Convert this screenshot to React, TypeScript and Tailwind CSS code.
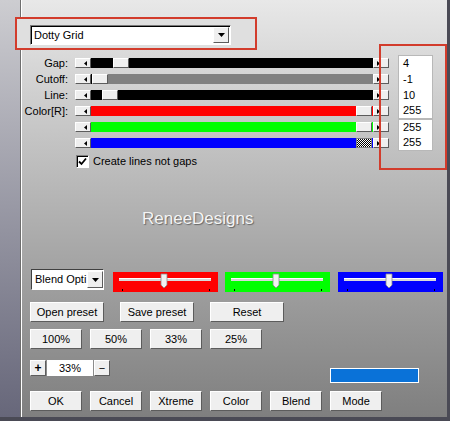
import React from 'react'

type Row = { label: string; fill: string; rest: string; pos: number; value: string; checker?: boolean }

const rows: Row[] = [
  { label: 'Gap:', fill: '#000000', rest: '#000000', pos: 22, value: '4' },
  { label: 'Cutoff:', fill: '#000000', rest: '#808080', pos: 1, value: '-1' },
  { label: 'Line:', fill: '#000000', rest: '#000000', pos: 11, value: '10' },
  { label: 'Color[R]:', fill: '#ff0000', rest: '#ff0000', pos: 265, value: '255' },
  { label: '', fill: '#00ff00', rest: '#00ff00', pos: 265, value: '255' },
  { label: '', fill: '#0000ff', rest: '#0000ff', pos: 265, value: '255', checker: true },
]

function Bevel({ className = '', children }: { className?: string; children?: React.ReactNode }) {
  return (
    <div
      className={`flex items-center justify-center bg-[#efefef] border border-t-white border-l-white border-r-[#5c5c5c] border-b-[#5c5c5c] ${className}`}
    >
      {children}
    </div>
  )
}

function Arrow({ dir }: { dir: 'left' | 'right' | 'down' }) {
  if (dir === 'down')
    return (
      <svg width="7" height="4" viewBox="0 0 7 4">
        <path d="M0 0H7L3.5 4Z" fill="#000" />
      </svg>
    )
  return (
    <svg width="3" height="5" viewBox="0 0 3 5">
      <path d={dir === 'left' ? 'M3 0V5L0 2.5Z' : 'M0 0V5L3 2.5Z'} fill="#000" />
    </svg>
  )
}

function ColorSlider({ color, className = '' }: { color: string; className?: string }) {
  return (
    <svg width="105" height="20" viewBox="0 0 105 20" className={className}>
      <rect width="105" height="20" fill={color} />
      <rect x="6" y="6" width="92" height="3" fill="#d8d8d8" />
      <rect x="6" y="6" width="92" height="1" fill="#ffffff" />
      <path d="M48 2H54V13L51 16L48 13Z" fill="#f2f2f2" stroke="#8a8a8a" strokeWidth="0.8" />
      <rect x="9" y="17" width="1" height="2" fill="#000" />
      <rect x="96" y="17" width="1" height="2" fill="#000" />
    </svg>
  )
}

function Btn({ w, label }: { w: string; label: string }) {
  return <Bevel className={`${w} h-[20px] text-[11px] text-black`}>{label}</Bevel>
}

export default function App() {
  return (
    <div className="flex w-[450px] h-[421px] overflow-hidden border-r-[3px] border-b-[4px] border-[#4a4a55] font-['Liberation_Sans',Arial,sans-serif] text-[11px] text-black">
      {/* left stripe */}
      <div className="w-[20px] h-full bg-linear-to-b from-[#cdcdd1] to-[#67677a]" />
      <div className="w-px h-full bg-[#6e6e6e]" />
      <div className="w-px h-full bg-white" />

      <div className="relative flex-1 flex flex-col bg-linear-to-b from-[#e8e8e8] to-[#7f7f7f]">
        {/* preset dropdown, highlighted */}
        <div className="relative -ml-[7px] mt-[17px] w-[242px] h-[33px] border-2 border-[#d23c2c] bg-[#dfdfdf] pl-[13px] pt-[6px]">
          <div className="flex items-center w-[201px] h-[20px] bg-white border border-t-[#7a7a7a] border-l-[#7a7a7a] border-r-white border-b-white shadow-[inset_1px_1px_0_#000]">
            <span className="flex-1 pl-[3px] leading-none">Dotty Grid</span>
            <Bevel className="w-[16px] h-[16px] mr-px">
              <Arrow dir="down" />
            </Bevel>
          </div>
        </div>

        {/* slider rows */}
        <div className="mt-[5px] flex flex-col">
          {rows.map((r, i) => (
            <div key={i} className="flex items-center h-[16px]">
              <div className="w-[48px] pr-[2px] text-right leading-none">{r.label}</div>
              <Bevel className="ml-[5px] w-[16px] h-[10px] !justify-end pr-[3px]">
                <Arrow dir="left" />
              </Bevel>
              <div className="flex w-[282px] h-[10px]" style={{ backgroundColor: r.rest }}>
                <div className="h-full" style={{ width: r.pos, backgroundColor: r.fill }} />
                {r.checker ? (
                  <div className="w-[16px] h-full border border-[#808080] bg-[image:repeating-conic-gradient(#000_0%_25%,#fff_0%_50%)] bg-[length:2px_2px]" />
                ) : (
                  <Bevel className="w-[16px] h-full" />
                )}
              </div>
              <Bevel className="w-[16px] h-[10px] !justify-start pl-[3px]">
                <Arrow dir="right" />
              </Bevel>
              <div
                className={`ml-[9px] w-[35px] h-[16px] flex items-center pl-[4px] bg-white border-x border-[#b8b8b8] leading-none ${
                  i === 0 || i === 4 ? 'border-t' : ''
                } ${i === 3 || i === 5 ? 'border-b' : ''}`}
              >
                {r.value}
              </div>
            </div>
          ))}
        </div>

        {/* checkbox */}
        <div className="flex items-center h-[20px] ml-[54px]">
          <div className="flex items-center justify-center w-[13px] h-[13px] bg-white border border-t-[#808080] border-l-[#808080] border-r-white border-b-white shadow-[inset_1px_1px_0_#000]">
            <svg width="9" height="9" viewBox="0 0 9 9">
              <path d="M1 4.5L3.5 7L8 1.5" fill="none" stroke="#000" strokeWidth="1.8" />
            </svg>
          </div>
          <span className="ml-[4px] leading-none">Create lines not gaps</span>
        </div>

        {/* watermark */}
        <div className="mt-[36px] ml-[120px] h-[24px] leading-[24px] text-[17px] text-[#f4f4f4] [text-shadow:1px_1px_1px_rgba(70,70,70,0.7)]">
          ReneeDesigns
        </div>

        {/* blend row */}
        <div className="mt-[38px] ml-[9px] flex items-start h-[23px]">
          <div className="flex items-center w-[73px] h-[21px] bg-white border border-t-[#404040] border-l-[#404040] border-r-white border-b-white">
            <span className="flex-1 pl-[3px] overflow-hidden whitespace-nowrap leading-none">Blend Opti</span>
            <Bevel className="w-[16px] h-[17px]">
              <Arrow dir="down" />
            </Bevel>
          </div>
          <ColorSlider color="#ff0000" className="ml-[9px] mt-[3px]" />
          <ColorSlider color="#00ff00" className="ml-[7px] mt-[3px]" />
          <ColorSlider color="#0000ff" className="ml-[8px] mt-[3px]" />
        </div>

        {/* preset buttons */}
        <div className="mt-[10px] ml-[8px] flex gap-[16px]">
          <Btn w="w-[74px]" label="Open preset" />
          <Btn w="w-[74px]" label="Save preset" />
          <Btn w="w-[74px]" label="Reset" />
        </div>

        {/* zoom buttons */}
        <div className="mt-[7px] ml-[8px] flex gap-[8px]">
          <Btn w="w-[52px]" label="100%" />
          <Btn w="w-[52px]" label="50%" />
          <Btn w="w-[52px]" label="33%" />
          <Btn w="w-[52px]" label="25%" />
        </div>

        {/* zoom field + color swatch */}
        <div className="mt-[11px] ml-[8px] flex items-start">
          <Bevel className="w-[16px] h-[16px] font-bold text-[12px]">+</Bevel>
          <div className="ml-px w-[46px] h-[16px] bg-white flex items-center justify-center leading-none">33%</div>
          <Bevel className="ml-px w-[16px] h-[16px]">−</Bevel>
          <div className="ml-[220px] mt-[8px] w-[89px] h-[15px] bg-[#0a72d8] border border-white" />
        </div>

        {/* bottom buttons */}
        <div className="mt-[8px] ml-[8px] flex gap-[8px]">
          <Btn w="w-[52px]" label="OK" />
          <Btn w="w-[52px]" label="Cancel" />
          <Btn w="w-[52px]" label="Xtreme" />
          <Btn w="w-[52px]" label="Color" />
          <Btn w="w-[52px]" label="Blend" />
          <Btn w="w-[52px]" label="Mode" />
        </div>

        {/* highlight around value fields */}
        <div className="absolute left-[357px] top-[44px] w-[68px] h-[126px] border-2 border-[#d23c2c] pointer-events-none" />
      </div>
    </div>
  )
}
